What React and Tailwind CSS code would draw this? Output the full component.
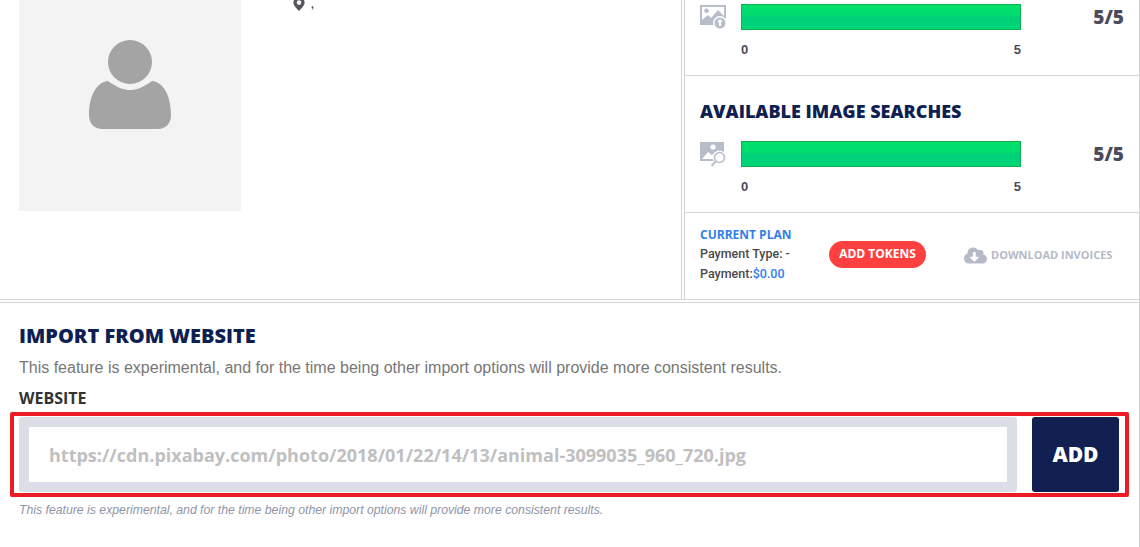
import React from 'react'
import { FaCloudDownloadAlt } from 'react-icons/fa'

const heading = "font-['Open_Sans',sans-serif] font-extrabold"
const body = "font-['Liberation_Sans',Arial,sans-serif]"

const UploadIcon = () => (
  <svg viewBox="0 0 26 24" className="w-[26px] h-[24px] shrink-0" fill="#b7bcc9">
    <path fillRule="evenodd" d="M0 0h26v20H0zM2 2v13l6-5 3 3 7-8 6 6V2zM6.500 3.500a2.300 2.300 0 1 1 0 4.600 2.300 2.300 0 0 1 0-4.600z" />
    <circle cx="20" cy="18" r="7" fill="#fff" />
    <circle cx="20" cy="18" r="5.500" />
    <path d="M20 14l3 3h-2v4h-2v-4h-2z" fill="#fff" />
  </svg>
)

const SearchIcon = () => (
  <svg viewBox="0 0 26 25" className="w-[26px] h-[25px] shrink-0" fill="#b7bcc9">
    <path d="M0 0h24v19H0z" />
    <circle cx="13" cy="5" r="2.600" fill="#fff" />
    <path d="M2 17l6-7 4 3 4-3 6 7z" fill="#fff" />
    <circle cx="19.500" cy="15.500" r="7" fill="#fff" />
    <circle cx="19.500" cy="15.500" r="5" fill="none" stroke="#b7bcc9" strokeWidth="1.500" />
    <path d="M15.500 19.500L11.500 24" stroke="#b7bcc9" strokeWidth="2" />
  </svg>
)

const TokenRow = ({ icon, value }) => (
  <div>
    <div className="flex items-center">
      <div className="w-[41px]">{icon}</div>
      <div className="w-[280px] h-[26px] border border-[#10b04e] bg-[linear-gradient(#00e06c_0%,#00dc70_40%,#00cf7a_55%,#00d878_100%)]" />
      <div className={`${heading} ml-auto mr-[15px] text-[19px] leading-none text-[#4c4b5b]`}>{value}</div>
    </div>
    <div className={`${body} ml-[41px] w-[280px] mt-[13px] flex justify-between text-[13px] leading-[14px] font-bold text-[#4c4b5b]`}>
      <span>0</span>
      <span>5</span>
    </div>
  </div>
)

const App = () => {
  return (
    <div className="w-[1140px] h-[547px] overflow-hidden bg-white border-r border-[#d4d4d4]">
      {/* Profile and tokens */}
      <div className="flex h-[300px] border-b border-[#d4d4d4]">
        <div className="w-[682px] shrink-0 border-r border-[#d4d4d4] flex pl-[19px]">
          <div className="w-[222px] h-[211px] bg-[#f3f3f3] flex items-start justify-center pt-[40px]">
            <svg viewBox="0 0 82 90" className="w-[82px] h-[90px]" fill="#a4a4a4">
              <circle cx="41" cy="22" r="22" />
              <path d="M19 41c10 7 16 9 22 9s12-2 22-9c11 1 19 14 19 34 0 9-6 14-13 14H13C6 89 0 84 0 75c0-20 8-33 19-34z" />
            </svg>
          </div>
          <div className="ml-[52px] flex items-start gap-[6px]">
            <svg viewBox="0 0 12 15" className="w-[12px] h-[14px] -mt-[3px]" fill="#55555c">
              <path fillRule="evenodd" d="M6 0a6 6 0 0 1 6 6c0 3.500-4 7-6 9-2-2-6-5.500-6-9a6 6 0 0 1 6-6zm0 3.500a2.500 2.500 0 1 0 0 5 2.500 2.500 0 0 0 0-5z" />
            </svg>
            <span className={`${body} text-[10px] leading-[10px] font-bold text-[#444]`}>,</span>
          </div>
        </div>
        <div className="ml-[2px] flex-1 border-l border-[#d4d4d4] flex flex-col">
          <div className="h-[76px] border-b border-[#d4d4d4] pl-[15px] pt-[4px]">
            <TokenRow icon={<UploadIcon />} value="5/5" />
          </div>
          <div className="h-[137px] border-b border-[#d4d4d4] pl-[15px] pt-[23px]">
            <h2 className={`${heading} text-[18px] leading-[24px] mb-[18px] text-[#101f52]`}>AVAILABLE IMAGE SEARCHES</h2>
            <TokenRow icon={<SearchIcon />} value="5/5" />
          </div>
          <div className="flex-1 flex items-center pl-[15px] pb-[3px]">
            <div className="w-[129px]">
              <div className="font-['Open_Sans',sans-serif] font-bold text-[12px] leading-[19px] text-[#2f80ed]">CURRENT PLAN</div>
              <div className="font-['Roboto',sans-serif] font-medium text-[12.500px] leading-[20px] text-[#4a4a4a]">Payment Type: -</div>
              <div className="font-['Roboto',sans-serif] font-medium text-[12.500px] leading-[20px] text-[#4a4a4a]">
                Payment:<span className="text-[#2f80ed]">$0.00</span>
              </div>
            </div>
            <button className="w-[97px] h-[27px] -mt-[1px] rounded-full bg-[#ff4040] text-white font-['Open_Sans',sans-serif] font-bold text-[12px]">ADD TOKENS</button>
            <div className="ml-[38px] mt-[1px] flex items-center gap-[4px] text-[#b5bac7]">
              <FaCloudDownloadAlt className="w-[23px] h-[23px]" />
              <span className="font-['Open_Sans',sans-serif] font-bold text-[11px]">DOWNLOAD INVOICES</span>
            </div>
          </div>
        </div>
      </div>

      {/* Import from website */}
      <div className="mt-[2px] border-t border-[#d4d4d4] pt-[19px]">
        <h2 className={`${heading} ml-[19px] text-[20px] leading-[27px] text-[#101f52]`}>IMPORT FROM WEBSITE</h2>
        <p className={`${body} ml-[19px] mt-[9px] text-[16px] leading-[20px] text-[#777]`}>
          This feature is experimental, and for the time being other import options will provide more consistent results.
        </p>
        <div className="ml-[19px] mt-[9px] font-['Open_Sans',sans-serif] font-bold text-[16px] leading-[22px] text-[#333]">WEBSITE</div>
        <div className="ml-[10px] mt-[3px] w-[1119px] h-[85px] border-4 border-[#ed1c24] rounded-[2px] pl-[5px] flex items-center">
          <div className="w-[998px] h-[75px] p-[10px] bg-[#dbdee7] rounded-[3px]">
            <input
              readOnly
              placeholder="https://cdn.pixabay.com/photo/2018/01/22/14/13/animal-3099035_960_720.jpg"
              className="w-full h-full bg-white px-[20px] font-['Open_Sans',sans-serif] font-bold text-[18px] outline-none placeholder:text-[#c0c0c0]"
            />
          </div>
          <button className="ml-[15px] w-[87px] h-[75px] rounded-[3px] bg-[#111f51] text-white font-['Open_Sans',sans-serif] font-extrabold text-[21px]">ADD</button>
        </div>
        <p className={`${body} ml-[19px] mt-[6px] italic text-[12.250px] leading-[14px] text-[#8f95a8]`}>
          This feature is experimental, and for the time being other import options will provide more consistent results.
        </p>
      </div>
    </div>
  )
}

export default App
